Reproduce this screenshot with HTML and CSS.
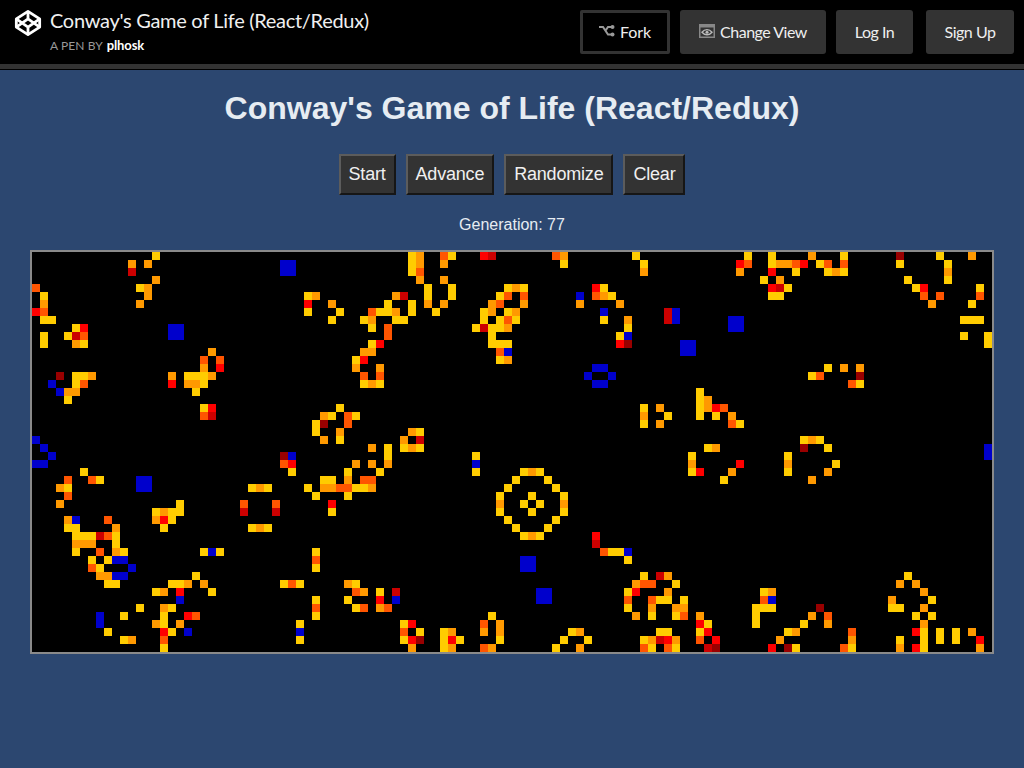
FILE: index.html
```html
<!DOCTYPE html>
<html lang="en">
<head>
    <meta charset="UTF-8">
    <meta name="viewport" content="width=device-width, initial-scale=1.0">
    <title>Conway's Game of Life (React/Redux)</title>
    <link rel="stylesheet" href="styles.css">
</head>
<body>
    <header class="pen-header">
        <div class="pen-title">
            <svg class="pen-logo" viewBox="0 0 24 24" aria-hidden="true">
                <polygon points="12 2 22 8.5 22 15.5 12 22 2 15.5 2 8.5"/>
                <path d="M12 22v-6.500M22 8.500l-10 7-10-7M2 15.500l10-7 10 7M12 2v6.500"/>
            </svg>
            <div>
                <h1>Conway's Game of Life (React/Redux)</h1>
                <p>A PEN BY <strong>plhosk</strong></p>
            </div>
        </div>
        <nav class="pen-actions">
            <a class="pen-btn pen-btn-outline fork-btn">
                <svg class="pen-icon" viewBox="0 0 16 12" aria-hidden="true">
                    <path class="fork-line" d="M0 2h4l5 7.500h3M7 4.800l2-2.800h3"/>
                    <circle cx="13.500" cy="2" r="2"/>
                    <circle cx="13.500" cy="9.500" r="2"/>
                </svg>
                Fork
            </a>
            <a class="pen-btn view-btn">
                <svg class="pen-icon" viewBox="0 0 16 14" aria-hidden="true">
                    <rect class="view-frame" x="0.750" y="0.750" width="14.500" height="12.500"/>
                    <rect class="view-bar" x="1" y="1" width="14" height="2.500"/>
                    <path class="view-eye" d="M3 8.200c2.800-3.400 7.200-3.400 10 0-2.800 3.400-7.200 3.400-10 0z"/>
                    <circle class="view-pupil" cx="8" cy="8.200" r="1.500"/>
                </svg>
                Change View
            </a>
            <a class="pen-btn login-btn">Log In</a>
            <a class="pen-btn signup-btn">Sign Up</a>
        </nav>
    </header>

    <main class="game">
        <h2>Conway's Game of Life (React/Redux)</h2>
        <div class="game-controls">
            <button>Start</button>
            <button>Advance</button>
            <button>Randomize</button>
            <button>Clear</button>
        </div>
        <p class="generation">Generation: 77</p>
        <div class="board" id="board"></div>
    </main>

    <script src="game.js"></script>
</body>
</html>
```

FILE: styles.css
```css
* {
    box-sizing: border-box;
    margin: 0;
    padding: 0;
}

body {
    min-height: 100vh;
    background: #2c4770;
    color: #e6ecf2;
    font-family: 'Liberation Sans', Arial, sans-serif;
}

/* codepen bar */
.pen-header {
    display: flex;
    justify-content: space-between;
    align-items: flex-start;
    height: 69px;
    padding: 0 10px 0 14px;
    background: #000;
    border-bottom: 5px solid #333;
    box-shadow: 0 1px 0 #000;
    color: #fff;
    font-family: Lato, sans-serif;
}

.pen-title {
    display: flex;
    align-items: flex-start;
    gap: 8px;
    margin-top: 8px;
}

.pen-logo {
    width: 28px;
    height: 28px;
    margin-top: 1px;
    fill: none;
    stroke: #fff;
    stroke-width: 2.400;
    stroke-linejoin: round;
}

.pen-title h1 {
    font-size: 20px;
    font-weight: 400;
    line-height: 24px;
    letter-spacing: -0.300px;
    color: #f0f0f0;
}

.pen-title p {
    margin-top: 6px;
    font-size: 12px;
    line-height: 14px;
    letter-spacing: 0.100px;
    color: #999;
}

.pen-title strong {
    margin-left: 1px;
    color: #fff;
    font-size: 13px;
    font-weight: 700;
    letter-spacing: -0.100px;
}

.pen-actions {
    display: flex;
    gap: 10px;
    margin-top: 10px;
}

.pen-btn {
    display: flex;
    justify-content: center;
    align-items: center;
    gap: 5px;
    height: 44px;
    padding-bottom: 2px;
    background: #333;
    border-radius: 3px;
    color: #eee;
    font-size: 16px;
    letter-spacing: -0.500px;
}

.pen-btn-outline {
    background: #000;
    border: 3px solid #333;
    border-radius: 2px;
    letter-spacing: -0.100px;
}

.fork-btn { width: 90px; }
.view-btn { width: 146px; }
.login-btn { width: 77px; }
.signup-btn { width: 88px; margin-left: 3px; }

.pen-icon {
    width: 16px;
    fill: #999;
}

.fork-line {
    fill: none;
    stroke: #999;
    stroke-width: 2;
}

.view-frame {
    fill: none;
    stroke: #888;
    stroke-width: 1.500;
}

.view-bar { fill: #888; }

.view-eye {
    fill: none;
    stroke: #bbb;
    stroke-width: 1.400;
}

.view-pupil { fill: #bbb; }

/* game */
.game {
    display: flex;
    flex-direction: column;
    align-items: center;
}

.game h2 {
    margin-top: 21px;
    font-size: 32px;
    line-height: 36px;
    font-weight: 700;
}

.game-controls {
    display: flex;
    gap: 10px;
    margin-top: 28px;
}

.game-controls button {
    height: 41px;
    padding: 0 8px;
    background: #333;
    border: 2px solid;
    border-color: #5c5c5c #161616 #161616 #5c5c5c;
    color: #f0f0f0;
    font-family: inherit;
    font-size: 18px;
    letter-spacing: -0.200px;
}

.generation {
    margin-top: 21px;
    font-size: 16px;
    line-height: 18px;
}

.board {
    margin-top: 16px;
    border: 2px solid #8a8a8a;
    background: #000;
}

.board-row {
    display: flex;
}

.cell {
    width: 8px;
    height: 8px;
}

.cell-y { background: #ffcc00; }
.cell-o { background: #ff9900; }
.cell-d { background: #ff5500; }
.cell-r { background: #ff0000; }
.cell-c { background: #cc0000; }
.cell-m { background: #990000; }
.cell-b { background: #0000cc; }
```

FILE: game.js
```js
// board state at generation 77
// each token is a start column and one letter per cell, y = newest, m = oldest, b = just died
const COLS = 120;
const rows = [
    "15y 47yo 51dy 56rc 65do 75y 89y 92y 97o 101y 108m 113y 117o",
    "12o 14o 31bb 47yo 51o 66y 76y 88rd 92yoodr 98yd 101d 108y 114y",
    "12c 31bb 47yd 76o 88o 92r 95y 99yoy 114o",
    "15o 48o 51o 91y 93o 109y 114y",
    "0d 13yo 49y 52y 59yoy 70ry 92rcy 110yr 118y",
    "1y 14o 34yo 45oc 49y 52y 58yd 61d 68b 70doy 92yy 111d 113d 118d",
    "1o 13o 34r 37o 44y 47y 49o 51o 57od 61o 68o 73o 112o 117y",
    "0rd 34y 38y 42dyyo 47y 50y 56yo 59yo 71b 79cb",
    "1yy 37y 41yo 45yy 56y 58ydy 71y 74o 79cb 87bb 116yyy",
    "5yr 17bb 42y 44d 55ycyyo 74y 87bb",
    "1y 4ycd 17bb 44d 57y 73yb 116y 119y",
    "1y 5oy 42yr 57yyy 73rm 81bb 119y",
    "22o 41oo 58db 81bb",
    "21d 23d 40yr 58yo",
    "21o 23r 40o 43o 70bb 99y 101o 103o",
    "3m 5yyo 17o 19yyyo 41d 43d 69b 72b 97yd 103m",
    "2b 5yd 17r 19ooy 41yoy 70bb 102dy",
    "3boo 20y 83y",
    "4y 83yo",
    "21yr 38y 76y 78o 83yord",
    "21dc 36oy 39dy 76o 79y 83y 85y 87o",
    "35ym 39d 76y 78o 87dy",
    "35y 38o 47oy",
    "0b 36o 38y 46o 48c 96yoy",
    "1b 42o 44y 46yoy 84yo 96m 99y 119b",
    "2b 31mb 44y 55y 82y 94y 119b",
    "0bb 31dr 40o 42o 44o 55b 82o 88r 94o 100y",
    "6y 32y 39y 43y 55y 61yoy 82yr 87o 94y 99o",
    "4d 7dy 13bb 36yy 39o 41dd 60y 64y 86y 97o",
    "3oy 13bb 27yoy 34y 36ooddyyo 59y 65y",
    "4d 35y 39y 58y 62y 66y",
    "3o 18y 26d 30d 37r 58o 61y 63y 66o",
    "15yoyy 26c 30c 37y 58y 62y 66y",
    "4ob 9d 15ory 59y 65y",
    "4yy 10o 16y 27yoy 60y 64y",
    "5yyycdy 61yoy 70r",
    "5ooo 10y 70c",
    "5y 8d 10oy 21yby 35y 71dyyb",
    "7y 9ybb 35d 61bb 74y",
    "7dy 12b 35y 61bb",
    "8oo 10bb 20y 76y 78co 109y",
    "9yy 17yyo 21o 31ydy 39oy 75odd 80y 108o 110o",
    "15yo 18r 22y 40do 43y 45c 63bb 74yr 79o 91yo 111o",
    "18b 35y 39y 43r 45b 63bb 74d 77dyy 81y 91db 107o 112y",
    "13y 16oy 35d 40yd 43od 74y 77o 80oo 90yyy 98m 107yy 111o",
    "8b 11y 16y 19rd 35y 57y 75o 77y 80yd 83o 90y 97o 99d 110y 112y",
    "8b 15oy 18o 33y 46yr 56d 58o 83ry 90y 96y 99o 111o",
    "9y 16ry 19b 33b 46d 48y 51yo 56o 58o 67yo 78yy 83yr 94yo 102d 110ry 113y 115y 117o",
    "11yo 16d 33y 46yrm 51yry 58y 66y 69y 76yocro 83d 85r 93o 102o 108y 111y 113y 115y 118r",
    "16y 47o 51yo 56do 65y 68o 76dy 79dy 84cm 92r 94my 101dy 108o 110ry 118o"
];

const board = document.getElementById('board');

rows.forEach(row => {
    const cells = new Array(COLS).fill('');
    row.split(' ').forEach(token => {
        const start = parseInt(token, 10);
        const colors = token.replace(/\d+/, '');
        for (let i = 0; i < colors.length; i++) {
            cells[start + i] = colors[i];
        }
    });

    const rowEl = document.createElement('div');
    rowEl.className = 'board-row';
    cells.forEach(color => {
        const cell = document.createElement('div');
        cell.className = color ? `cell cell-${color}` : 'cell';
        rowEl.appendChild(cell);
    });
    board.appendChild(rowEl);
});
```
